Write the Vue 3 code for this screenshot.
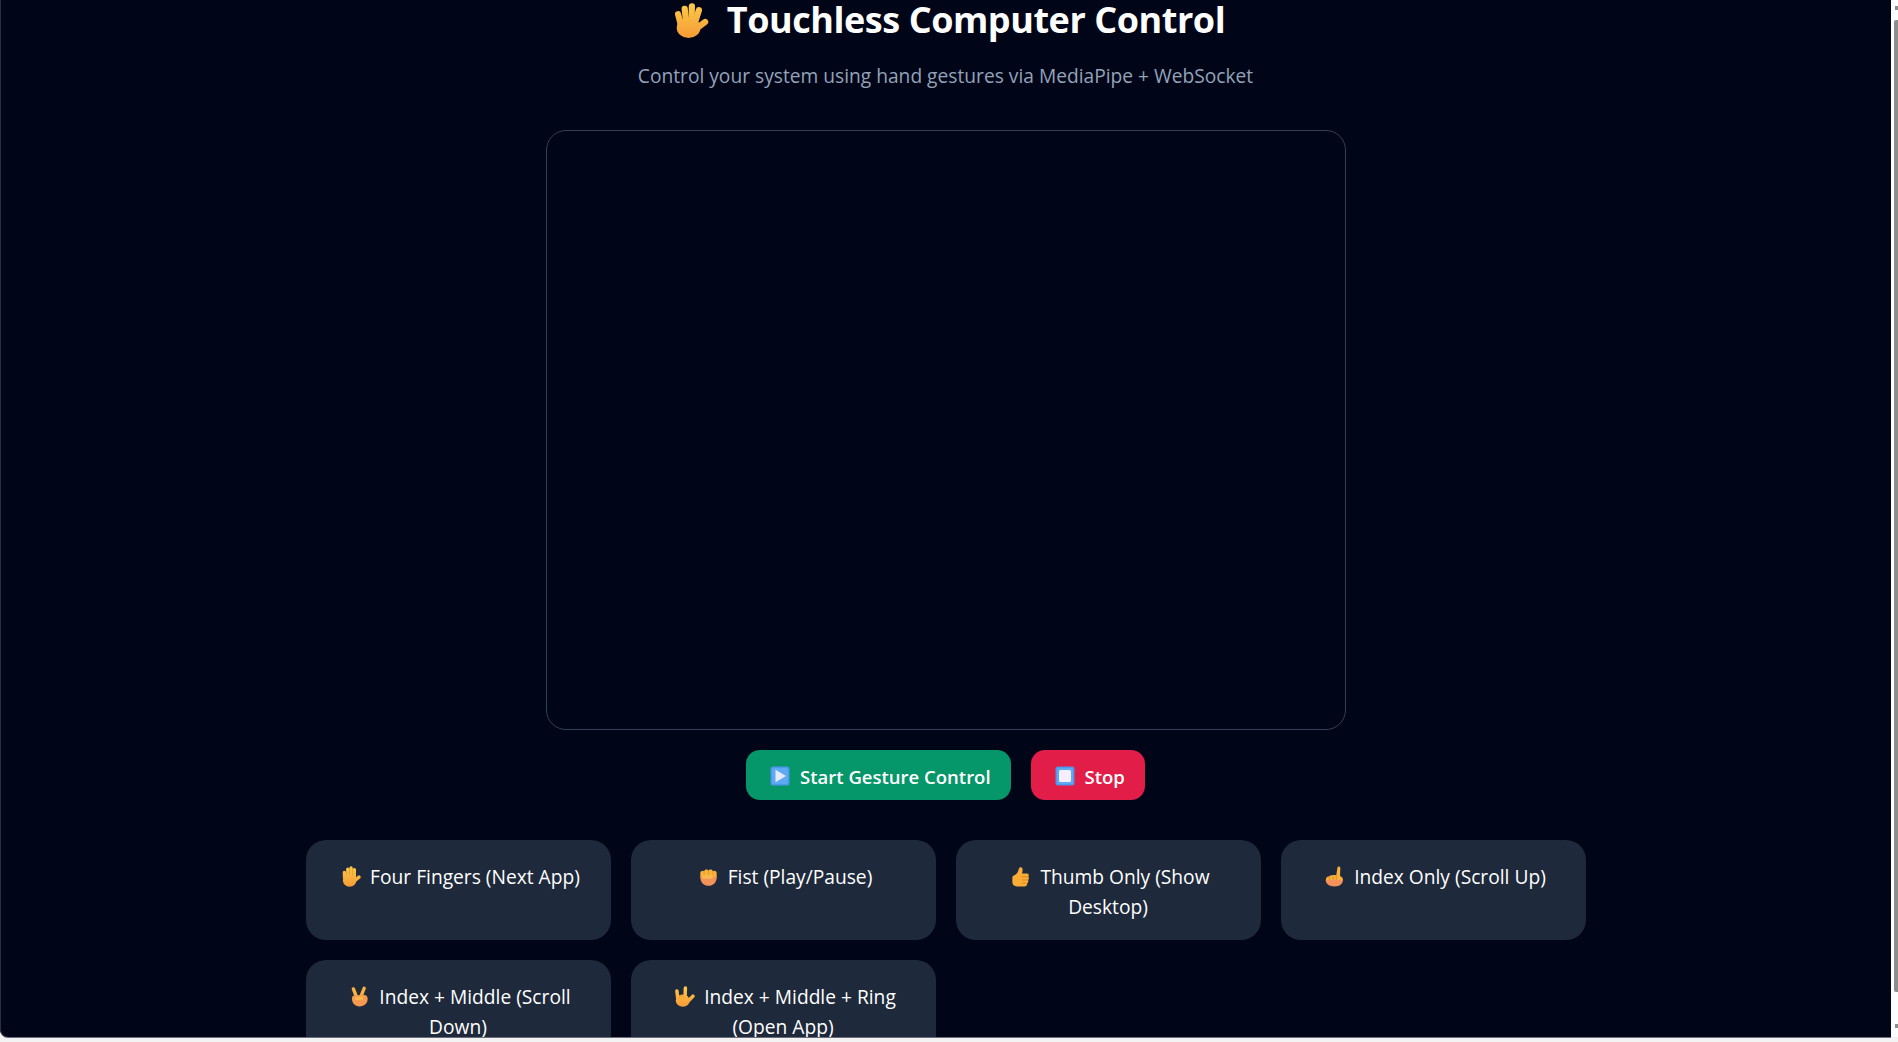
<template>
  <div class="screen">
    <div class="viewport">
      <div class="page">
        <h1 class="title">
          <svg class="emoji title-emoji" viewBox="0 0 36 36" aria-hidden="true"><use href="#e-splayed" /></svg>
          <span>Touchless Computer Control</span>
        </h1>
        <p class="subtitle">Control your system using hand gestures via MediaPipe + WebSocket</p>
        <div class="stage"></div>
        <div class="actions">
          <button class="btn start">
            <svg class="emoji btn-emoji" viewBox="0 0 20 20" aria-hidden="true">
              <rect x="0.5" y="0.5" width="19" height="19" rx="2.5" fill="#4f97ea" />
              <rect x="2" y="2" width="16" height="16" rx="1.5" fill="#5fa8f2" />
              <path d="M5.5 3.8 L16 10 L5.5 16.2 Z" fill="#e6eaff" />
            </svg>
            <span>Start Gesture Control</span>
          </button>
          <button class="btn stop">
            <svg class="emoji btn-emoji" viewBox="0 0 20 20" aria-hidden="true">
              <rect x="0.5" y="0.5" width="19" height="19" rx="2.5" fill="#4f97ea" />
              <rect x="2" y="2" width="16" height="16" rx="1.5" fill="#5fa8f2" />
              <rect x="4" y="4" width="12" height="12" rx="1.5" fill="#f6eeff" />
            </svg>
            <span>Stop</span>
          </button>
        </div>
        <div class="grid">
          <div v-for="g in gestures" :key="g.label" class="card">
            <svg class="emoji card-emoji" viewBox="0 0 36 36" aria-hidden="true"><use :href="'#' + g.icon" /></svg>
            {{ g.label }}
          </div>
        </div>
      </div>
    </div>
    <div class="scrollbar" aria-hidden="true">
      <span class="arrow up"></span>
      <span class="thumb"></span>
      <span class="arrow down"></span>
    </div>
    <svg class="defs" width="0" height="0" aria-hidden="true">
      <defs>
        <linearGradient id="skin" gradientUnits="userSpaceOnUse" x1="0" y1="0" x2="0" y2="36">
          <stop offset="0" stop-color="#fdcb48" />
          <stop offset="1" stop-color="#f59a36" />
        </linearGradient>
        <g id="e-splayed">
          <g fill="none" stroke="url(#skin)" stroke-width="6.4" stroke-linecap="round">
            <path d="M7.5 24 L4.2 11.5" />
            <path d="M12.5 20 L11 6" />
            <path d="M18 20 L18.4 3.4" />
            <path d="M21 22 L25.6 7.5" />
            <path d="M22 27 L32 19.5" />
          </g>
          <ellipse cx="15" cy="25.5" rx="12.2" ry="10.5" fill="url(#skin)" />
        </g>
        <g id="e-raised">
          <g fill="none" stroke="url(#skin)" stroke-width="5.8" stroke-linecap="round">
            <path d="M8 22 L7.5 11" />
            <path d="M13.4 20 L13.4 5.5" />
            <path d="M19 20 L19 3.4" />
            <path d="M24.6 20 L24.6 6.5" />
            <path d="M24 26 L32.5 19" />
          </g>
          <ellipse cx="16.5" cy="25" rx="11.5" ry="10.5" fill="url(#skin)" />
        </g>
        <g id="e-fist">
          <path fill="#f9b23c" d="M4 12 C4 8 9 7 10.5 9 C11 5 17 5 18 8 C19 5 25 5 25.5 9 C27 7 32 8 32 12 L32 20 L4 20 Z" />
          <path fill="#f2925a" d="M4 18 L32 18 C32.5 27 27 34 18 34 C9 34 3.5 27 4 18 Z" />
          <path fill="#fbb94c" d="M7 16 L23 16 C26 16 26 22 23 22 L7 22 Z" />
          <path fill="none" stroke="#dd8a2e" stroke-width="1.1" d="M10.6 9 L10.6 15 M18 8 L18 15 M25.5 9 L25.5 15" />
        </g>
        <g id="e-thumb">
          <path fill="#f9ac36" d="M4 20 C4 17 7 16 9 15 C12 13 14 9 15 5 C16 1 21 1.5 21.5 5 C22 8 21 11 20.5 13 L29 13 C32 13 33 16 31.5 18 C33 20 32.5 23 31 24 C32 26 31 29 29.5 30 C30 33 27 35 25 35 L12 35 C7 35 4 32 4 28 Z" />
          <path fill="none" stroke="#d5761f" stroke-width="1.2" d="M20 18.5 L31 18.5 M20 24 L31 24 M20 29.5 L29.5 29.5" />
        </g>
        <g id="e-index">
          <path fill="#fab03c" d="M21 16 L23 3 C23.5 0 28 0.5 28 3.5 L27.5 17 C31 18 33 21 32.5 25 L3 25 C3 20 5 18 8 18 C10 16 17 15 21 16 Z" />
          <path fill="#f2925a" d="M3 24 L32.6 24 C32 31 27 35 18 35 C9 35 3 31 3 24 Z" />
          <path fill="none" stroke="#d5761f" stroke-width="1.1" d="M9.5 18 L9.5 24 M15.5 16.5 L15.5 24 M21 16 L21 24" />
        </g>
        <g id="e-victory">
          <g fill="none" stroke="#fab03c" stroke-width="5.8" stroke-linecap="round">
            <path d="M13 19 L7.5 5" />
            <path d="M20 19 L26 4" />
          </g>
          <path fill="#f5994e" d="M5 21 C5 17 8 16 12 16 L26 15.5 C30 15.5 32 18 32 22 C32 30 26 35 18 35 C10 35 5 29 5 21 Z" />
          <path fill="#fbb94c" d="M10 19 L22 18 C25 18 25 23.5 22 23.5 L10 24 Z" />
        </g>
        <g id="e-love">
          <g fill="none" stroke="url(#skin)" stroke-width="6" stroke-linecap="round">
            <path d="M6.5 22 L5 8.5" />
            <path d="M19 20 L19.5 3.4" />
            <path d="M24 26 L32.5 17.5" />
          </g>
          <ellipse cx="15" cy="25" rx="12" ry="10.5" fill="url(#skin)" />
          <path fill="none" stroke="#e88a2c" stroke-width="1.2" stroke-linecap="round" d="M9.5 20 C11 15 15 15 16 20" />
        </g>
      </defs>
    </svg>
  </div>
</template>

<script setup>
const gestures = [
  { icon: 'e-raised', label: 'Four Fingers (Next App)' },
  { icon: 'e-fist', label: 'Fist (Play/Pause)' },
  { icon: 'e-thumb', label: 'Thumb Only (Show Desktop)' },
  { icon: 'e-index', label: 'Index Only (Scroll Up)' },
  { icon: 'e-victory', label: 'Index + Middle (Scroll Down)' },
  { icon: 'e-love', label: 'Index + Middle + Ring (Open App)' }
]
</script>

<style>
html, body { margin: 0; background: #f3f3f3; overflow: hidden; }
</style>

<style scoped>
.screen {
  position: relative;
  width: 1898px;
  height: 1042px;
  overflow: hidden;
  background: #f3f3f3;
  font-family: "Open Sans", "Noto Sans", sans-serif;
}
.viewport {
  width: 1891px;
  height: 1037px;
  overflow: hidden;
  background: #000518;
  border-bottom-left-radius: 8px;
  box-shadow: 0 1px 0 #6b6e7a, inset 1px 0 0 #2c2f3f;
}
.page {
  display: flex;
  flex-direction: column;
  align-items: center;
  color: #fff;
}
.title {
  display: flex;
  align-items: center;
  justify-content: center;
  gap: 18px;
  box-sizing: border-box;
  height: 40px;
  margin: 0;
  padding-left: 8px;
  font-size: 36px;
  font-weight: 700;
  line-height: 40px;
  letter-spacing: -0.45px;
}
.subtitle {
  margin: 22px 0 0;
  height: 28px;
  font-size: 19.2px;
  line-height: 28px;
  color: #94a3b8;
}
.stage {
  box-sizing: border-box;
  width: 800px;
  height: 600px;
  margin-top: 40px;
  border: 1px solid #334155;
  border-radius: 20px;
  background: #000518;
}
.actions {
  display: flex;
  gap: 20px;
  margin-top: 20px;
}
.btn {
  display: flex;
  align-items: center;
  gap: 10px;
  height: 50px;
  padding: 2px 20px 0 24px;
  border: 0;
  border-radius: 14px;
  color: #fff;
  font-family: inherit;
  font-size: 18.5px;
  font-weight: 600;
}
.start { background: #059669; }
.stop { background: #e11d48; }
.grid {
  display: grid;
  grid-template-columns: repeat(4, 305px);
  gap: 20px;
  margin-top: 40px;
}
.card {
  box-sizing: border-box;
  height: 100px;
  padding: 22px 20px 0;
  border-radius: 20px;
  background: #1e293b;
  font-size: 19.2px;
  line-height: 30px;
  text-align: center;
}
.emoji { flex: none; }
.title-emoji { width: 35px; height: 35px; }
.btn-emoji { width: 20px; height: 20px; }
.card-emoji { width: 21px; height: 21px; margin: 0 4px; vertical-align: -3px; }
.defs { position: absolute; }
.scrollbar {
  position: absolute;
  top: 0;
  right: 0;
  width: 7px;
  height: 1037px;
  background: #fdfdfd;
}
.thumb {
  position: absolute;
  top: 20px;
  right: 0;
  width: 4px;
  height: 972px;
  background: #8d8d8d;
  border-radius: 2px 0 0 2px;
}
.arrow {
  position: absolute;
  right: 0;
  width: 3px;
  height: 4px;
  background: #8d8d8d;
}
.arrow.up { top: 6px; }
.arrow.down { top: 1024px; }
</style>
